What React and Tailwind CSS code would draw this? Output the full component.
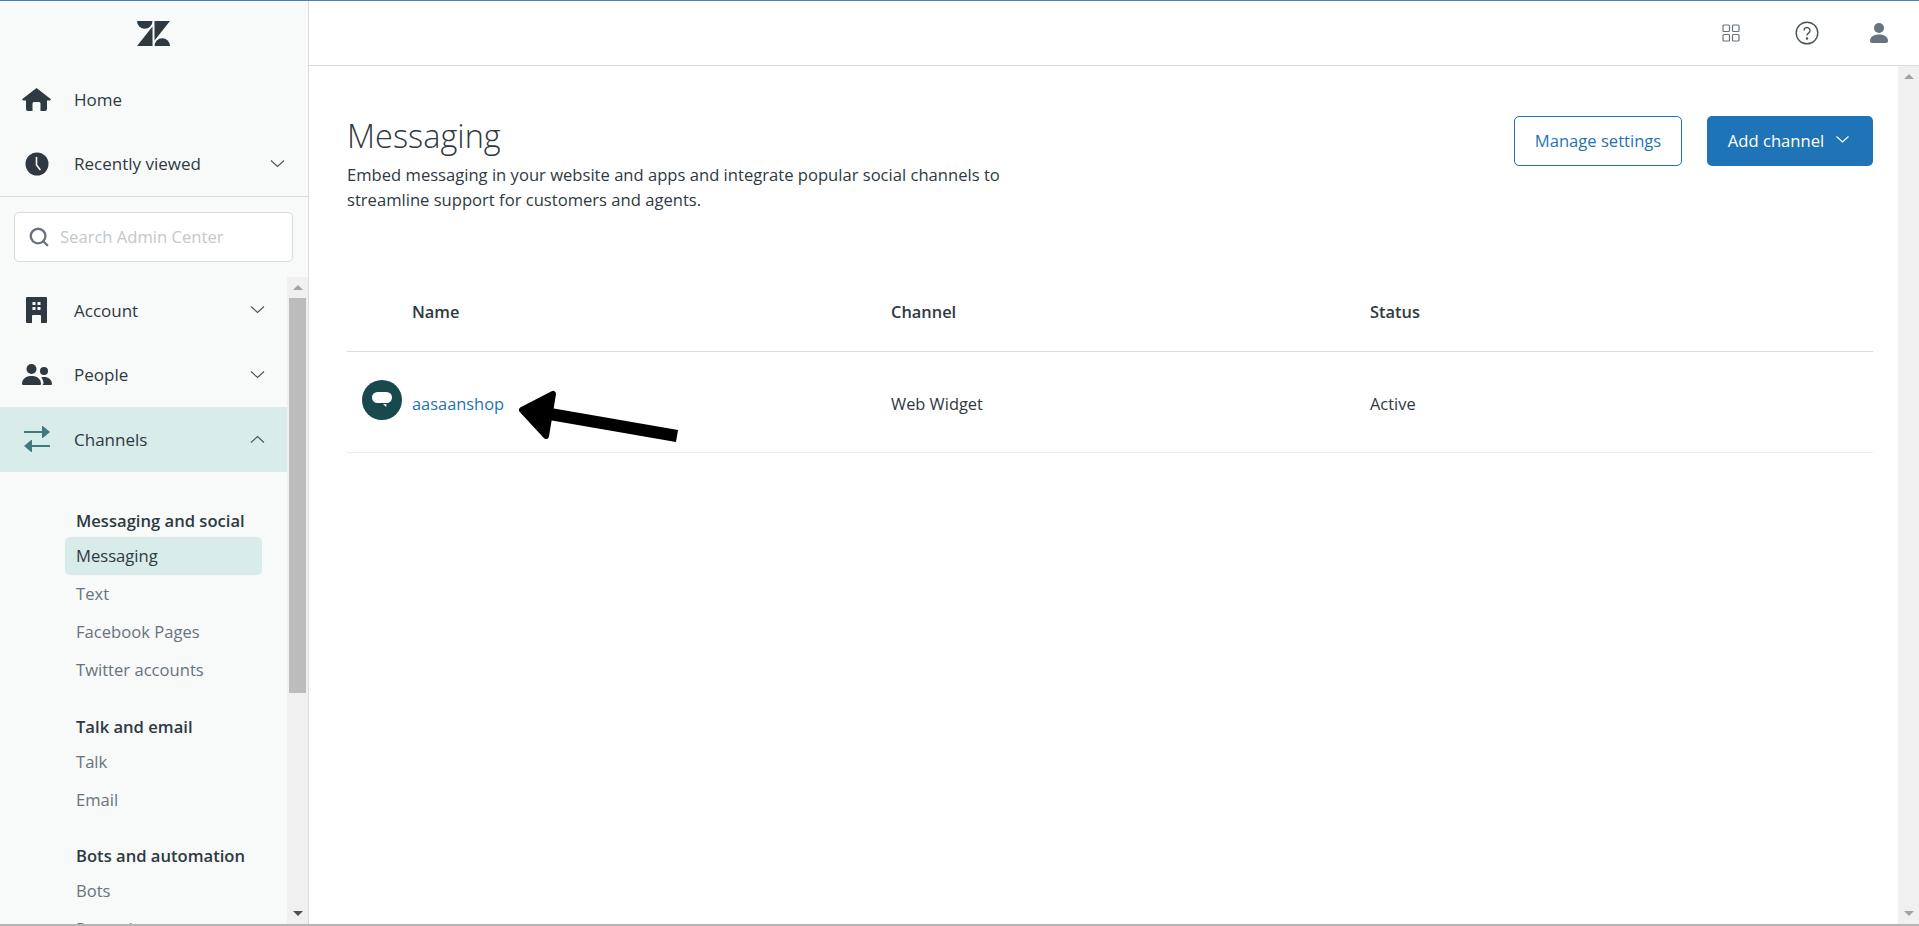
import React from 'react';
import { Search } from 'lucide-react';

const Chevron = ({ up, className }) => (
    <svg width="15" height="8" viewBox="0 0 15 8" fill="none" stroke="#49545c" strokeWidth="1.1" className={className}>
        <path d={up ? 'M1 7.5L7.5 1.5L14 7.5' : 'M1 .5L7.5 6.5L14 .5'} />
    </svg>
);

const Logo = () => (
    <svg width="33" height="25" viewBox="0 0 33 25" fill="#2f3941">
        <path d="M0 0h15.5a7.75 7.75 0 0 1-15.5 0z" />
        <path d="M15.5 5.5V25H0z" />
        <path d="M17.5 0V19.5L33 0z" />
        <path d="M17.5 25a7.75 7.75 0 0 1 15.5 0z" />
    </svg>
);

const HomeIcon = () => (
    <svg width="29" height="23" viewBox="0 0 29 23" fill="#2f3941">
        <path d="M14.5 0L29 11.2 28 12.6H25V21a2 2 0 0 1-2 2H18.5V15.5a1.5 1.5 0 0 0-1.5-1.5H12a1.5 1.5 0 0 0-1.5 1.5V23H6a2 2 0 0 1-2-2V12.6H1L0 11.2z" />
    </svg>
);

const ClockIcon = () => (
    <svg width="24" height="24" viewBox="0 0 24 24">
        <circle cx="12" cy="12" r="11.5" fill="#2f3941" />
        <path d="M11.5 5.5V13L15 17.5" fill="none" stroke="#f8f9f9" strokeWidth="1.6" strokeLinecap="round" />
    </svg>
);

const BuildingIcon = () => (
    <svg width="21" height="26" viewBox="0 0 21 26">
        <path d="M1 0h19a1 1 0 0 1 1 1v24a1 1 0 0 1-1 1h-5v-7a1 1 0 0 0-1-1H7a1 1 0 0 0-1 1v7H1a1 1 0 0 1-1-1V1a1 1 0 0 1 1-1z" fill="#2f3941" />
        <path d="M6.5 5h3v3h-3zM11.5 5h3v3h-3zM6.5 10h3v3h-3zM11.5 10h3v3h-3z" fill="#f8f9f9" />
    </svg>
);

const PeopleIcon = () => (
    <svg width="30" height="21" viewBox="0 0 30 21" fill="#2f3941">
        <circle cx="9.5" cy="5" r="5" />
        <circle cx="22" cy="7" r="4" />
        <path d="M0 19.5C.5 14.5 4 12 9.5 12s9 2.5 9.5 7.5c0 1-.5 1.5-1.5 1.5h-16C.5 21 0 20.5 0 19.5z" />
        <path d="M20.5 21h8c1 0 1.5-.5 1.5-1.5-.5-4-3.5-6.5-8-6.5-1 0-2 .1-2.8.4 1.5 1.5 2.3 3.6 2.3 6z" />
    </svg>
);

const ChannelsIcon = () => (
    <svg width="26" height="28" viewBox="0 0 26 28" fill="#3f7a7c">
        <path d="M0 6h18V1.5a.5.5 0 0 1 .8-.4L26 7l-7.2 5.9a.5.5 0 0 1-.8-.4V8H0z" />
        <path d="M26 20H8v-4.500a.5.5 0 0 0-.8-.4L0 21l7.200 5.900a.5.5 0 0 0 .8-.4V22h18z" />
    </svg>
);

const NavRow = ({ icon, label, chevron, up, active, right = 'pr-[22px]' }) => (
    <div className={`h-[64.5px] flex items-center text-[17px] text-[#2f3941] ${active ? 'bg-[#d8ecea]' : ''} ${right}`}>
        <div className="w-[74px] shrink-0 flex justify-center pr-[1px]">{icon}</div>
        <span className="flex-1">{label}</span>
        {chevron && <Chevron up={up} />}
    </div>
);

const SubHead = ({ children, className = '' }) => (
    <div className={`ml-[76px] h-[32px] flex items-center font-semibold text-[#2f3941] ${className}`}>{children}</div>
);

const SubItem = ({ children, active }) => (
    <div className={`ml-[65px] w-[197px] pl-[11px] h-[38px] flex items-center rounded-[5px] ${active ? 'bg-[#d8ecea] text-[#2f3941]' : 'text-[#68737d]'}`}>
        {children}
    </div>
);

const ScrollTrack = ({ thumb, downClass }) => (
    <div className="w-[21px] shrink-0 bg-[#f0f0f0] flex flex-col items-center">
        <div className="h-[21px] shrink-0 flex items-center justify-center">
            <div className="w-0 h-0 border-x-[5px] border-x-transparent border-b-[5px] border-b-[#a3a3a3]" />
        </div>
        <div className="flex-1 w-[17px]">
            {thumb && <div className="w-full h-[395px] bg-[#bcbcbc]" />}
        </div>
        <div className="h-[21px] shrink-0 flex items-center justify-center">
            <div className={`w-0 h-0 border-x-[5px] border-x-transparent border-t-[5px] ${downClass}`} />
        </div>
    </div>
);

const Sidebar = () => (
    <aside className="w-[309px] shrink-0 h-full flex flex-col bg-[#f8f9f9] border-r border-[#d8dcde] text-[16.6px] overflow-hidden">
        <div className="h-[66px] shrink-0 flex items-start justify-center pt-[20px] pr-[1px]">
            <Logo />
        </div>
        <NavRow icon={<HomeIcon />} label="Home" />
        <NavRow icon={<ClockIcon />} label="Recently viewed" chevron right="pr-[23px]" />
        <div className="h-[81px] shrink-0 border-t border-[#d8dcde] pt-[15px] pl-[14px]">
            <div className="w-[279px] h-[50px] bg-white border border-[#d8dcde] rounded-[5px] flex items-center pl-[13px] gap-[10px] text-[#c2c8cc]">
                <Search size={22} color="#68737d" strokeWidth={2.6} />
                <span>Search Admin Center</span>
            </div>
        </div>
        <div className="flex-1 min-h-0 flex">
            <div className="flex-1 min-w-0 overflow-hidden pt-[1px]">
                <NavRow icon={<BuildingIcon />} label="Account" chevron />
                <NavRow icon={<PeopleIcon />} label="People" chevron />
                <NavRow icon={<ChannelsIcon />} label="Channels" chevron up active />
                <div className="pt-[33.5px]">
                    <SubHead>Messaging and social</SubHead>
                    <SubItem active>Messaging</SubItem>
                    <SubItem>Text</SubItem>
                    <SubItem>Facebook Pages</SubItem>
                    <SubItem>Twitter accounts</SubItem>
                    <SubHead className="mt-[22px]">Talk and email</SubHead>
                    <SubItem>Talk</SubItem>
                    <SubItem>Email</SubItem>
                    <SubHead className="mt-[21px]">Bots and automation</SubHead>
                    <SubItem>Bots</SubItem>
                    <SubItem>Reporting</SubItem>
                </div>
            </div>
            <ScrollTrack thumb downClass="border-t-[#505050]" />
        </div>
    </aside>
);

const Header = () => (
    <header className="h-[65px] shrink-0 border-b border-[#d8dcde] flex items-center justify-end">
        <svg width="18" height="18" viewBox="0 0 18 18" fill="none" stroke="#68737d" strokeWidth="1.2">
            <rect x="1" y="1" width="6.5" height="6.5" rx="1" />
            <rect x="10.5" y="1" width="6.5" height="6.5" rx="1" />
            <rect x="1" y="10.5" width="6.5" height="6.5" rx="1" />
            <rect x="10.5" y="10.5" width="6.5" height="6.5" rx="1" />
        </svg>
        <svg width="24" height="24" viewBox="0 0 24 24" fill="none" stroke="#49545c" strokeWidth="1.4" className="ml-[55px]">
            <circle cx="12" cy="12" r="10.8" />
            <path d="M9 9.5a3 3 0 1 1 4.8 2.4c-1.1.8-1.8 1.3-1.8 2.6" />
            <circle cx="12" cy="17.5" r=".6" fill="#49545c" />
        </svg>
        <svg width="18" height="20" viewBox="0 0 18 20" fill="#68737d" className="ml-[51px] mr-[31px]">
            <circle cx="9" cy="5" r="5" />
            <path d="M0 18c0-4 3.5-6.5 9-6.5s9 2.5 9 6.5c0 1-.8 2-2 2H2c-1.2 0-2-1-2-2z" />
        </svg>
    </header>
);

const Arrow = () => (
    <svg width="180" height="70" viewBox="0 0 180 70" className="absolute left-[510px] top-[385px]">
        <path d="M167 51L40 29" stroke="#000" strokeWidth="12" />
        <path d="M12 25L43 9 36 51z" fill="#000" stroke="#000" strokeWidth="6" strokeLinejoin="round" />
    </svg>
);

const Main = () => (
    <div className="flex-1 min-w-0 h-full flex flex-col">
        <Header />
        <div className="flex-1 min-h-0 flex">
            <main className="flex-1 min-w-0 pl-[38px] pr-[25px]">
                <div className="flex items-start justify-between pt-[50px]">
                    <div>
                        <h1 className="text-[32.5px] leading-[40px] font-light text-[#2f3941]">Messaging</h1>
                        <p className="w-[680px] mt-[6px] text-[16.6px] leading-[25px] text-[#2f3941]">
                            Embed messaging in your website and apps and integrate popular social channels to streamline support for customers and agents.
                        </p>
                    </div>
                    <div className="flex gap-[25px] text-[16.6px]">
                        <button className="w-[168px] h-[50px] border border-[#1f73b7] rounded-[5px] text-[#1f73b7]">Manage settings</button>
                        <button className="w-[166px] h-[50px] pr-[3px] bg-[#1f73b7] rounded-[5px] text-white flex items-center justify-center gap-[12px]">
                            Add channel
                            <svg width="13" height="7" viewBox="0 0 13 7" fill="none" stroke="#fff" strokeWidth="1.1" className="mb-[4px]">
                                <path d="M.5 .5L6.5 6L12.5 .5" />
                            </svg>
                        </button>
                    </div>
                </div>
                <div className="mt-[70px] text-[16.4px] text-[#2f3941]">
                    <div className="grid grid-cols-[544px_479px_1fr] h-[70px] items-center border-b border-[#d8dcde] font-semibold pb-[8px]">
                        <span className="pl-[65px]">Name</span>
                        <span>Channel</span>
                        <span>Status</span>
                    </div>
                    <div className="grid grid-cols-[544px_479px_1fr] h-[101px] items-center border-b border-[#e9ebed] pt-[4px]">
                        <div className="flex items-center pl-[15px]">
                            <div className="w-[40px] h-[40px] -mt-[8px] rounded-full bg-[#17494d] flex items-center justify-center shrink-0">
                                <svg width="20" height="16" viewBox="0 0 20 16" fill="#fff">
                                    <rect x="0" y="0" width="20" height="11" rx="5.5" />
                                    <path d="M11 12l3.5 .2-.3 2.8z" />
                                </svg>
                            </div>
                            <span className="ml-[10px] text-[#1f73b7]">aasaanshop</span>
                        </div>
                        <span>Web Widget</span>
                        <span>Active</span>
                    </div>
                </div>
            </main>
            <ScrollTrack downClass="border-t-[#a3a3a3]" />
        </div>
    </div>
);

const App = () => (
    <div className="relative h-[926px] w-[1919px] overflow-hidden bg-white flex flex-col font-['Open_Sans',sans-serif]">
        <div className="h-px shrink-0 bg-[#4a7ebb]" />
        <div className="flex-1 min-h-0 flex">
            <Sidebar />
            <Main />
        </div>
        <div className="h-[2px] shrink-0 bg-[#b5b5b5]" />
        <Arrow />
    </div>
);

export default App;
